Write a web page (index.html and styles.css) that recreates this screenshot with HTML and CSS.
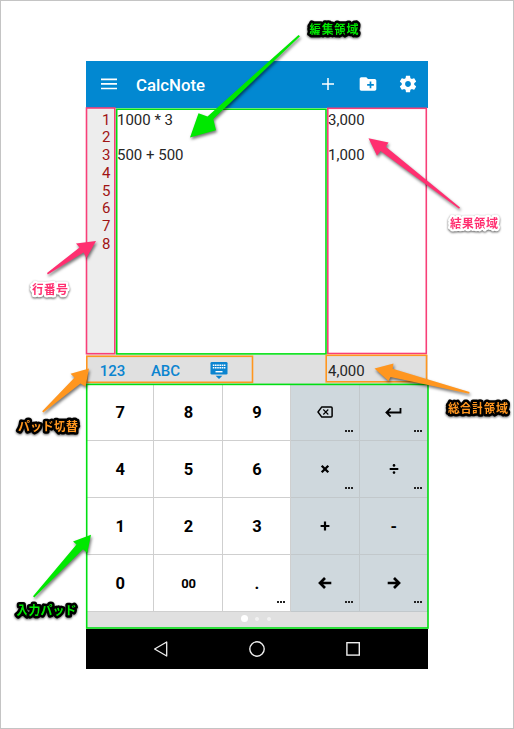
FILE: index.html
```html
<!DOCTYPE html>
<html lang="ja">
<head>
<meta charset="utf-8">
<title>CalcNote</title>
<link rel="stylesheet" href="styles.css">
</head>
<body>
<main class="page">
  <div class="phone">
    <header class="appbar">
      <svg class="menu" width="16" height="12" viewBox="0 0 16 12"><path d="M0 1.3h16M0 5.9h16M0 10.5h16" stroke="#fff" stroke-width="1.7"/></svg>
      <h1 class="title">CalcNote</h1>
      <div class="actions">
        <svg width="20" height="20" viewBox="0 0 20 20"><path d="M10 4v12M4 10h12" stroke="#fff" stroke-width="1.5"/></svg>
        <svg width="20" height="20" viewBox="0 2 24 20"><path fill="#fff" d="M20 6h-8l-2-2H4c-1.11 0-1.99.89-1.99 2L2 18c0 1.11.89 2 2 2h16c1.11 0 2-.89 2-2V8c0-1.11-.89-2-2-2zm-1 8h-3v3h-2v-3h-3v-2h3V9h2v3h3v2z"/></svg>
        <svg width="20" height="20" viewBox="0 0 24 24"><path fill="#fff" d="M19.43 12.98c.04-.32.07-.64.07-.98s-.03-.66-.07-.98l2.11-1.65c.19-.15.24-.42.12-.64l-2-3.46c-.12-.22-.39-.3-.61-.22l-2.49 1c-.52-.4-1.08-.73-1.69-.98l-.38-2.65C14.46 2.18 14.25 2 14 2h-4c-.25 0-.46.18-.49.42l-.38 2.65c-.61.25-1.17.59-1.69.98l-2.49-1c-.23-.09-.49 0-.61.22l-2 3.46c-.13.22-.07.49.12.64l2.11 1.65c-.04.32-.07.65-.07.98s.03.66.07.98l-2.11 1.65c-.19.15-.24.42-.12.64l2 3.46c.12.22.39.3.61.22l2.49-1c.52.4 1.08.73 1.69.98l.38 2.65c.03.24.24.42.49.42h4c.25 0 .46-.18.49-.42l.38-2.65c.61-.25 1.17-.59 1.69-.98l2.49 1c.23.09.49 0 .61-.22l2-3.46c.12-.22.07-.49-.12-.64l-2.11-1.65zM12 15.5c-1.93 0-3.5-1.57-3.5-3.5s1.57-3.5 3.5-3.5 3.5 1.57 3.5 3.5-1.57 3.5-3.5 3.5z"/></svg>
      </div>
    </header>
    <section class="editor">
      <div class="lines"><div>1</div><div>2</div><div>3</div><div>4</div><div>5</div><div>6</div><div>7</div><div>8</div></div>
      <div class="source"><div>1000 * 3</div><div>&nbsp;</div><div>500 + 500</div></div>
      <div class="results"><div>3,000</div><div>&nbsp;</div><div>1,000</div></div>
    </section>
    <div class="switcher">
      <span class="tab">123</span>
      <span class="tab">ABC</span>
      <span class="tab"><svg width="18" height="17" viewBox="0 0 18 17"><rect x=".5" y="0" width="17" height="12.5" rx="1.3" fill="#0b84d0"/><path d="M2.8 3.2h12.6M2.8 5.7h12.6" stroke="#fff" stroke-width="1.5" stroke-dasharray="1.6 .6"/><path d="M5.5 9.7h7" stroke="#fff" stroke-width="1.4"/><path d="M5.6 13.8h6.8L9 17z" fill="#0b84d0"/></svg></span>
      <span class="total">4,000</span>
    </div>
    <section class="pad">
      <div class="key">7</div><div class="key">8</div><div class="key">9</div>
      <div class="key op more"><svg width="16" height="12" viewBox="0 0 16 12"><path d="M4.8.9h9.3q1 0 1 1v8.2q0 1-1 1H4.8L1 6z" fill="none" stroke="#000" stroke-width="1.5" stroke-linejoin="round"/><path d="M6.3 3.5l5 5m0-5l-5 5" stroke="#000" stroke-width="1.1"/></svg></div>
      <div class="key op more"><svg width="17" height="12" viewBox="0 0 17 12"><path d="M15.5 2v4.5H2M5.6 2.3L1.4 6.5l4.2 4.2" fill="none" stroke="#000" stroke-width="1.8"/></svg></div>
      <div class="key">4</div><div class="key">5</div><div class="key">6</div>
      <div class="key op more"><svg width="10" height="10" viewBox="0 0 10 10"><path d="M1.7 1.7l6.6 6.6m0-6.6L1.7 8.3" stroke="#000" stroke-width="2.3"/></svg></div>
      <div class="key op more"><svg width="10" height="10" viewBox="0 0 10 10"><path d="M.7 5h8.6" stroke="#000" stroke-width="2"/><circle cx="5" cy="1.4" r="1.3"/><circle cx="5" cy="8.6" r="1.3"/></svg></div>
      <div class="key">1</div><div class="key">2</div><div class="key">3</div>
      <div class="key op"><svg width="10" height="10" viewBox="0 0 10 10"><path d="M.6 5h8.8M5 .6v8.8" stroke="#000" stroke-width="2.2"/></svg></div>
      <div class="key op">-</div>
      <div class="key">0</div><div class="key small">00</div><div class="key more">.</div>
      <div class="key op more"><svg width="14" height="12" viewBox="0 0 14 12"><path d="M13.3 6H2.2M7 1L2 6l5 5" fill="none" stroke="#000" stroke-width="2.7"/></svg></div>
      <div class="key op more"><svg width="14" height="12" viewBox="0 0 14 12"><path d="M.7 6h11.1M7 1l5 5-5 5" fill="none" stroke="#000" stroke-width="2.7"/></svg></div>
    </section>
    <div class="pager"><i class="dot active"></i><i class="dot"></i><i class="dot"></i></div>
    <nav class="navbar">
      <svg width="16" height="18" viewBox="0 0 16 18"><path d="M13.7 2v14L1.6 9z" fill="none" stroke="#eee" stroke-width="1.3" stroke-linejoin="round"/></svg>
      <svg width="18" height="18" viewBox="0 0 18 18"><circle cx="9" cy="9" r="7.2" fill="none" stroke="#eee" stroke-width="1.4"/></svg>
      <svg width="16" height="16" viewBox="0 0 16 16"><rect x="1.9" y="1.7" width="12.4" height="12.4" fill="none" stroke="#eee" stroke-width="1.4"/></svg>
    </nav>
  </div>

  <svg class="notes" width="514" height="729" viewBox="0 0 514 729">
    <g class="frames">
      <rect class="pink" x="86.5" y="108" width="28.3" height="245.7"/>
      <rect class="green" x="116.7" y="109.2" width="209.3" height="244.7"/>
      <rect class="pink" x="327.8" y="108.3" width="98.5" height="245.2"/>
      <rect class="orange" x="86.8" y="356.3" width="165.7" height="26"/>
      <rect class="orange" x="326.2" y="355.3" width="100.3" height="26.5"/>
      <rect class="green" x="86.7" y="384.4" width="341.3" height="243.6"/>
    </g>
    <g class="arrows">
      <path fill="#00e800" d="M298.5 35L300 36.3 213.3 119 216 130.3 190 137.5 198.5 113.3 207.5 116.5z"/>
      <path fill="#ff2f70" d="M368.5 138.3L388.5 142.5 385.8 146.7 460 207.5 459 208.8 380.5 151 377 155.8z"/>
      <path fill="#ff2f70" d="M96 241L86.5 258 83.6 252.5 47.8 274.5 47 273 79.5 247.5 76 243.5z"/>
      <path fill="#ff961f" d="M89 368.5L85.5 386.5 80.5 383.5 43.3 412.5 42.2 411.3 74.6 377.5 70.5 373.8z"/>
      <path fill="#ff961f" d="M374.5 368.5L393.5 363.5 392.7 368.7 469.5 392 469.2 393.8 390.5 377 388.5 381z"/>
      <path fill="#00e800" d="M91 534.7L87.3 553 83 549.3 34.3 597.5 33 596.2 76.5 544.5 73 541.5z"/>
    </g>
    <g class="labels">
      <text class="dark lime" x="309.5" y="34" textLength="49">編集領域</text>
      <text class="light" x="450" y="228" textLength="48">結果領域</text>
      <text class="light" x="32" y="293.8" textLength="36">行番号</text>
      <text class="dark amber" x="18" y="431" textLength="60">パッド切替</text>
      <text class="dark amber" x="448" y="413" textLength="60">総合計領域</text>
      <text class="dark lime" x="16.5" y="615" textLength="60">入力パッド</text>
    </g>
  </svg>
</main>
</body>
</html>
```
FILE: styles.css
```css
* { box-sizing: border-box; }
body { margin: 0; background: #fff; font-family: Roboto, "Noto Sans CJK JP", sans-serif; }
.page {
  position: relative;
  width: 514px;
  height: 729px;
  border: 1px solid #c4c4c4;
  padding: 59.5px 0 0 85px;
  overflow: hidden;
}
.phone { width: 342px; display: flex; flex-direction: column; }
svg { display: block; }
.appbar {
  height: 47px;
  display: flex;
  align-items: center;
  padding: 0 10.5px 0 15px;
  background: #0288d1;
}
.title { margin: 1px 0 0 19px; font-size: 16.8px; font-weight: 500; color: #fff; }
.actions { display: flex; gap: 20px; margin-left: auto; }
.editor {
  height: 247px;
  display: grid;
  grid-template-columns: 30px 211px 1fr;
  font-size: 15px;
  line-height: 17.75px;
  color: #262626;
}
.editor > div { padding-top: 4px; }
.lines { background: #ededed; color: #a01414; text-align: right; padding-right: 5.5px; }
.source { padding-left: 1px; }
.results { padding-left: 1px; }
.switcher {
  height: 30px;
  display: grid;
  grid-template-columns: 53px 53px 53px 1fr;
  align-items: center;
  background: #e0e0e0;
  padding-top: 2px;
}
.tab { display: flex; justify-content: center; font-size: 15px; font-weight: 500; color: #0b84d0; }
.total { font-size: 15px; color: #262626; padding-left: 83px; }
.pad {
  height: 227.5px;
  display: grid;
  grid-template-columns: repeat(5, 1fr);
  grid-template-rows: repeat(4, 1fr);
}
.key {
  position: relative;
  display: flex;
  align-items: center;
  justify-content: center;
  padding-left: 1px;
  border-right: 1px solid #cfcfcf;
  border-bottom: 1px solid #cfcfcf;
  background: #fff;
  font-size: 16.5px;
  font-weight: 700;
  color: #000;
}
.op { background: #cfd8dd; border-color: #c2c8cb; }
.small { font-size: 13px; }
.more::after {
  content: "";
  position: absolute;
  right: 5.5px;
  bottom: 8.5px;
  width: 8px;
  height: 2px;
  background: linear-gradient(90deg, #222 2px, transparent 2px 3px, #222 3px 5px, transparent 5px 6px, #222 6px);
}
.pager {
  height: 17px;
  display: flex;
  align-items: center;
  justify-content: center;
  gap: 8px;
  padding: 0 2px 4px 0;
  background: #e0e0e0;
}
.dot { width: 4px; height: 4px; border-radius: 50%; background: #f1f1f1; }
.active { width: 7.5px; height: 7.5px; background: #fff; margin-right: -1px; }
.navbar {
  height: 40px;
  display: flex;
  align-items: center;
  justify-content: space-between;
  padding: 0 67px;
  background: #000;
}
.notes { position: absolute; left: -1px; top: -1px; }
.frames rect { fill: none; stroke-width: 1.6; }
.pink { stroke: #f83f78; }
.green { stroke: #00df12; }
.orange { stroke: #ff961f; }
.arrows { filter: drop-shadow(1px 2px 1.5px rgba(0, 0, 0, .55)); }
.labels text {
  font: 700 12px "Noto Sans CJK JP", sans-serif;
  paint-order: stroke;
  stroke-linejoin: round;
}
.dark { stroke: #000; stroke-width: 5px; filter: drop-shadow(0 1px 1px rgba(0, 0, 0, .6)); }
.light { fill: #ff2f70; stroke: #fff; stroke-width: 4.5px; filter: drop-shadow(0 1px 1px rgba(0, 0, 0, .65)); }
.lime { fill: #00e800; }
.amber { fill: #ff961f; }
```
